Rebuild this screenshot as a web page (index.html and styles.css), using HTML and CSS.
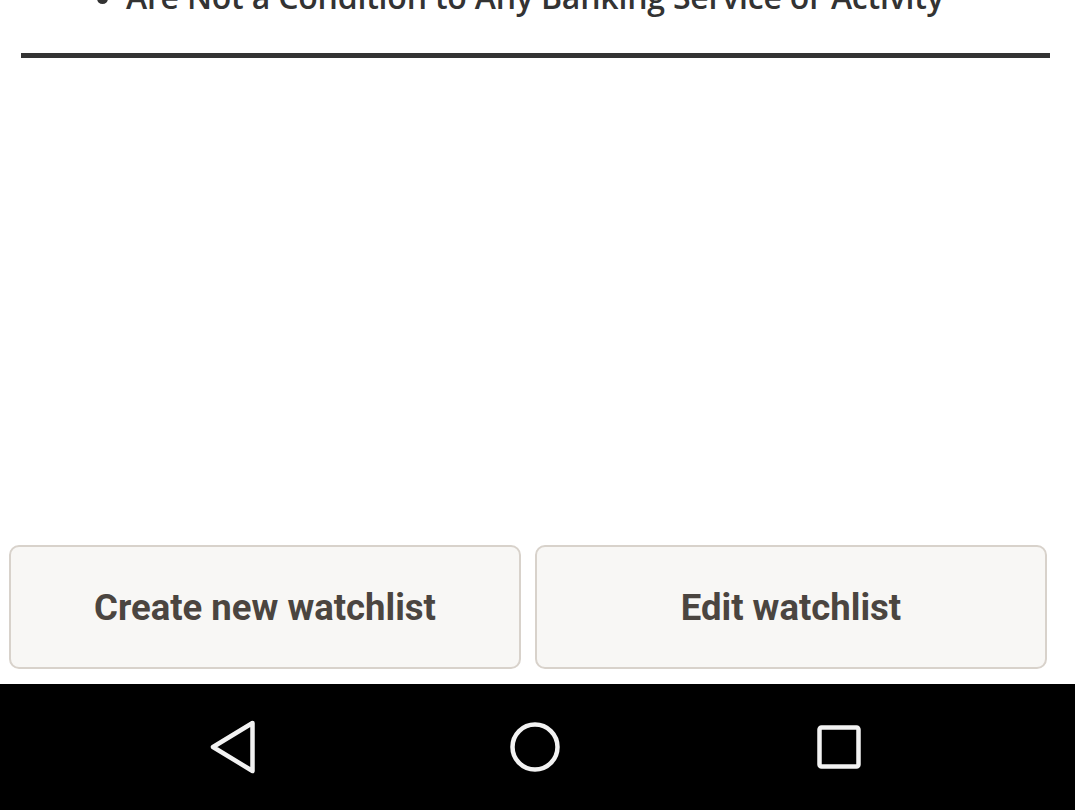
FILE: index.html
```html
<!DOCTYPE html>
<html lang="en">
<head>
<meta charset="utf-8">
<title>Watchlist</title>
<link rel="stylesheet" href="styles.css">
</head>
<body>
<div class="page">
  <main class="content">
    <ul class="disclaimer">
      <li>Are Not a Condition to Any Banking Service or Activity</li>
    </ul>
    <div class="rule"></div>
    <div class="spacer"></div>
    <div class="actions">
      <button class="btn">Create new watchlist</button>
      <button class="btn">Edit watchlist</button>
    </div>
  </main>
  <nav class="navbar">
    <svg class="nav-icon" width="60" height="60" viewBox="0 0 60 60">
      <polygon points="50.5,6 11,30 50.5,54" fill="none" stroke="#f2f2f2" stroke-width="4.5" stroke-linejoin="round"/>
    </svg>
    <svg class="nav-icon" width="60" height="60" viewBox="0 0 60 60">
      <circle cx="30" cy="30" r="22.5" fill="none" stroke="#f2f2f2" stroke-width="4.5"/>
    </svg>
    <svg class="nav-icon" width="60" height="60" viewBox="0 0 60 60">
      <rect x="10.5" y="10.5" width="39" height="39" rx="2" fill="none" stroke="#f2f2f2" stroke-width="4.5"/>
    </svg>
  </nav>
</div>
</body>
</html>
```
FILE: styles.css
```css
html, body {
  margin: 0;
  padding: 0;
  background: #ffffff;
}
.page {
  width: 1075px;
  height: 810px;
  display: flex;
  flex-direction: column;
  overflow: hidden;
}
.content {
  flex: 1;
  display: flex;
  flex-direction: column;
  background: #fff;
}
.disclaimer {
  margin: -25px 0 0 0;
  padding: 0 0 0 126px;
  font-family: "Open Sans", sans-serif;
  font-weight: 600;
  font-size: 32px;
  line-height: 44px;
  color: #333333;
}
.disclaimer li {
  letter-spacing: -0.2px;
}
.rule {
  height: 5px;
  background: #333333;
  margin: 34px 25px 0 21px;
}
.spacer {
  flex: 1;
}
.actions {
  display: grid;
  grid-template-columns: 512px 512px;
  gap: 14px;
  padding: 0 0 15px 9px;
}
.btn {
  height: 124px;
  background: #f8f7f5;
  border: 2px solid #d8d2cb;
  border-radius: 10px;
  font-family: Roboto, "Liberation Sans", sans-serif;
  font-weight: 700;
  font-size: 36.5px;
  color: #4b4540;
  padding: 0;
}
.navbar {
  height: 126px;
  background: #000;
  display: flex;
  align-items: center;
  justify-content: flex-start;
  gap: 243.5px;
  padding-left: 201.5px;
}
.nav-icon {
  display: block;
}
```
